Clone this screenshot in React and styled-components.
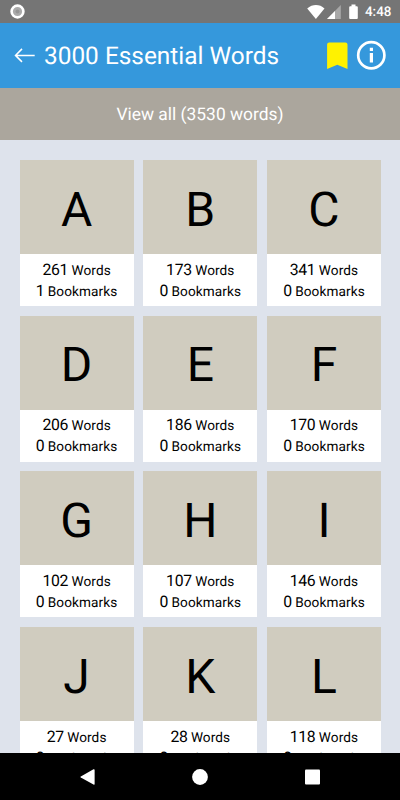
import React from "react";
import styled, { createGlobalStyle } from "styled-components";

const GlobalStyle = createGlobalStyle`
  * { box-sizing: border-box; }
  body {
    margin: 0;
    font-family: Roboto, "Liberation Sans", sans-serif;
    text-rendering: geometricPrecision;
  }
`;

const Screen = styled.div`
  display: flex;
  flex-direction: column;
  width: 400px;
  height: 800px;
  overflow: hidden;
  background: #dee3ec;
`;

const StatusBar = styled.div`
  display: flex;
  align-items: center;
  flex: none;
  height: 23.3px;
  padding: 0 8px 0 10px;
  background: #757575;
  color: #fff;
`;

const StatusIcons = styled.svg`
  margin-left: auto;
`;

const Clock = styled.span`
  width: 27px;
  margin-left: 6px;
  padding-top: 2px;
  font-size: 13.4px;
  font-weight: 500;
  line-height: 23px;
  white-space: nowrap;
`;

const Header = styled.header`
  display: flex;
  align-items: center;
  flex: none;
  height: 64.4px;
  padding: 0 14px;
  background: #3598dc;
  color: #fff;
`;

const Title = styled.h1`
  flex: 1;
  margin: 1px 0 0 8px;
  font-size: 24.4px;
  font-weight: 400;
  line-height: 28px;
  white-space: nowrap;
`;

const InfoIcon = styled.svg`
  margin-left: 8px;
`;

const ViewAll = styled.button`
  flex: none;
  height: 52.6px;
  padding: 3px 0 0;
  border: 0;
  background: #aba69d;
  color: #fff;
  font: 400 17.4px/24px Roboto, sans-serif;
  text-rendering: geometricPrecision;
`;

const Grid = styled.main`
  display: grid;
  flex: 1;
  min-height: 0;
  overflow: hidden;
  grid-template-columns: repeat(3, 114px);
  grid-auto-rows: 145.7px;
  gap: 9.9px 9.7px;
  padding: 20px 0 0 19.6px;
`;

const Card = styled.section`
  display: flex;
  flex-direction: column;
  background: #fff;
  color: #000;
`;

const Letter = styled.div`
  height: 93.7px;
  padding-top: 2.6px;
  background: #d0ccbf;
  font-size: 48px;
  line-height: 94px;
  text-align: center;
`;

const Stats = styled.div`
  padding-top: 4.9px;
`;

const Stat = styled.div`
  height: 21px;
  font-size: 13.6px;
  line-height: 21px;
  letter-spacing: 0.1px;
  text-align: center;
  white-space: nowrap;
`;

const Count = styled.span`
  font-size: 15.8px;
  letter-spacing: -0.35px;
`;

const NavBar = styled.nav`
  display: flex;
  align-items: center;
  justify-content: space-around;
  flex: none;
  height: 46.7px;
  padding: 0 32px;
  background: #000;
`;

const words = [
  ["A", 261, 1], ["B", 173, 0], ["C", 341, 0],
  ["D", 206, 0], ["E", 186, 0], ["F", 170, 0],
  ["G", 102, 0], ["H", 107, 0], ["I", 146, 0],
  ["J", 27, 0], ["K", 28, 0], ["L", 118, 0],
];

export default function App() {
  return (
    <>
      <GlobalStyle />
      <Screen>
        <StatusBar>
          <svg width="15" height="15" viewBox="0 0 15 15">
            <circle cx="7.5" cy="7.5" r="5" fill="#aaa" />
            <circle cx="7.5" cy="7.5" r="2" fill="#949494" />
            <circle cx="7.5" cy="7.5" r="5.9" fill="none" stroke="#fff" strokeWidth="2.6" />
          </svg>
          <StatusIcons width="52" height="16" viewBox="0 0 52 16" fill="#fff">
            <path d="M0.2 4.4C5.5-.1 12.5-.1 17.5 4.4L8.9 15z" />
            <path d="M33.8 1V15H20z" fill="#a8a8a8" />
            <path d="M28 7V15H20z" />
            <path d="M43.2 2.2h1.3V.6h4v1.6h1.3q1 0 1 1V14q0 1-1 1h-6.6q-1 0-1-1V3.2q0-1 1-1z" />
          </StatusIcons>
          <Clock>4:48</Clock>
        </StatusBar>
        <Header>
          <svg width="22" height="16" viewBox="0 0 22 16" fill="none" stroke="#fff" strokeWidth="1.5">
            <path d="M20.7 8.4H1.8M8 1.9L1.5 8.4L8 14.9" />
          </svg>
          <Title>3000 Essential Words</Title>
          <svg width="21" height="27" viewBox="0 0 21 27" fill="#fff200">
            <path d="M2.2 0.4h16.2q2.1 0 2.1 2.1v24.4l-10.2-4.2L.1 26.9V2.5Q.1.4 2.2.4z" />
          </svg>
          <InfoIcon width="30" height="30" viewBox="0 0 30 30" fill="#fff">
            <circle cx="15.3" cy="15.3" r="13.1" fill="none" stroke="#fff" strokeWidth="2.7" />
            <path d="M13.8 7.8h3.2v3.3h-3.2zM13.8 13h3.2v9.6h-3.2z" />
          </InfoIcon>
        </Header>
        <ViewAll>View all (3530 words)</ViewAll>
        <Grid>
          {words.map(([letter, count, bookmarks]) => (
            <Card key={letter}>
              <Letter>{letter}</Letter>
              <Stats>
                <Stat><Count>{count}</Count> Words</Stat>
                <Stat><Count>{bookmarks}</Count> Bookmarks</Stat>
              </Stats>
            </Card>
          ))}
        </Grid>
        <NavBar>
          <svg width="16" height="16" viewBox="0 0 16 16" fill="#fff">
            <path d="M.8 7.4L13.5.3q1.1-.5 1.1.6v14.2q0 1-1.1.5L.8 8.5q-.8-.5 0-1.1z" />
          </svg>
          <svg width="16" height="16" viewBox="0 0 16 16" fill="#fff">
            <circle cx="8" cy="8" r="7.9" />
          </svg>
          <svg width="16" height="16" viewBox="0 0 16 16" fill="#fff">
            <rect x="1" y=".5" width="15" height="15" rx="1" />
          </svg>
        </NavBar>
      </Screen>
    </>
  );
}
